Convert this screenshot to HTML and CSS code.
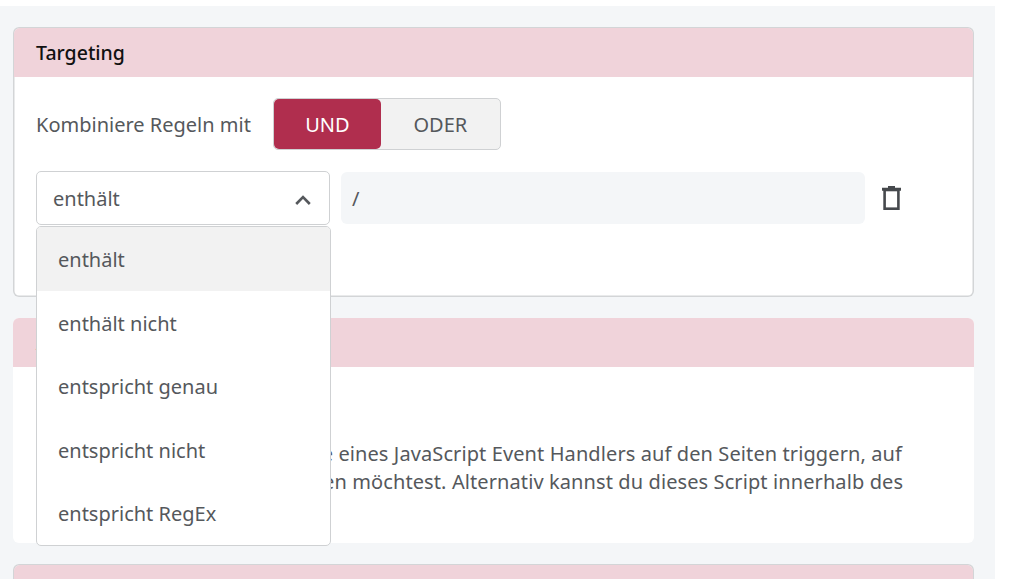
FILE: index.html
```html
<!DOCTYPE html>
<html lang="de">
<head>
<meta charset="utf-8">
<title>Targeting</title>
<link rel="stylesheet" href="styles.css">
</head>
<body>
<main class="page">
  <section class="card card-bordered">
    <h2 class="card-head">Targeting</h2>
    <div class="card-body targeting">
      <div class="combine">
        <span class="combine-label">Kombiniere Regeln mit</span>
        <div class="toggle">
          <button class="toggle-btn is-on">UND</button>
          <button class="toggle-btn">ODER</button>
        </div>
      </div>
      <div class="rule">
        <div class="select-wrap">
          <div class="select">
            <span>enthält</span>
            <svg class="chevron" viewBox="0 0 16 10" width="16" height="10"><path d="M1.2 9 8 2.2 14.8 9" fill="none" stroke="#55585c" stroke-width="2.6"/></svg>
          </div>
          <ul class="menu">
            <li class="menu-item is-active">enthält</li>
            <li class="menu-item">enthält nicht</li>
            <li class="menu-item">entspricht genau</li>
            <li class="menu-item">entspricht nicht</li>
            <li class="menu-item">entspricht RegEx</li>
          </ul>
        </div>
        <div class="value">/</div>
        <svg class="trash" viewBox="0 0 19 24" width="19" height="24"><path d="M0 1.8h19v3H0zM6 0h7v2H6z" fill="#46494d"/><rect x="2.6" y="4" width="13.8" height="18.7" fill="none" stroke="#46494d" stroke-width="2.6"/></svg>
      </div>
    </div>
  </section>
  <section class="card">
    <h2 class="card-head">Aktivierung</h2>
    <div class="card-body activation">
      <p class="text">Du kannst den Versuch mithilfe eines JavaScript Event Handlers auf den Seiten triggern, auf<br>denen du deinen Test ausspielen möchtest. Alternativ kannst du dieses Script innerhalb des</p>
    </div>
  </section>
  <section class="card card-bordered card-next">
    <div class="card-head"></div>
  </section>
</main>
</body>
</html>
```
FILE: styles.css
```css
* { box-sizing: border-box; }
html, body { margin: 0; height: 100%; overflow: hidden; background: #fff; }
body { padding-top: 6px; font-family: "Noto Sans", "Open Sans", sans-serif; color: #55585c; }
.page {
  width: 995px;
  height: 573px;
  overflow: hidden;
  background: #f4f6f8;
  padding: 21px 21px 0 13px;
  display: flex;
  flex-direction: column;
  gap: 21px;
}
.card { background: #fff; border-radius: 6px; flex: none; }
.card-bordered { box-shadow: inset 0 0 0 1.5px #d3d5d7; }
.card-head {
  margin: 0;
  height: 49px;
  display: flex;
  align-items: center;
  padding-left: 23px;
  background: #f0d3da;
  border-radius: 6px 6px 0 0;
  color: #111;
  font-size: 19.5px;
  font-weight: 500;
}
.card-bordered .card-head { margin: 1px 1px 0; padding-left: 22px; }
.targeting { height: 220px; padding: 21px 23px; }
.combine { display: flex; align-items: center; gap: 22px; }
.combine-label { font-size: 20px; }
.toggle {
  display: flex;
  width: 228px;
  height: 52px;
  border: 1px solid #cfd1d3;
  border-radius: 5px;
  background: #f2f2f2;
}
.toggle-btn {
  flex: 1 1 0;
  border: 0;
  background: transparent;
  border-radius: 5px;
  font: inherit;
  font-size: 20px;
  color: #55585c;
  padding: 0;
}
.toggle-btn.is-on { flex: none; width: 107px; background: #b02e4e; color: #fff; }
.rule { display: flex; align-items: center; margin-top: 21px; }
.select-wrap { position: relative; width: 294px; flex: none; }
.select {
  height: 54px;
  display: flex;
  align-items: center;
  justify-content: space-between;
  padding: 1px 18px 0 16px;
  border: 1px solid #cfd1d3;
  border-radius: 5px;
  background: #fff;
  font-size: 20px;
}
.chevron { margin-top: 2px; }
.menu {
  position: absolute;
  z-index: 5;
  left: 0;
  top: 55px;
  width: 295px;
  margin: 0;
  padding: 0;
  list-style: none;
  background: #fff;
  border: 1px solid #cfd1d3;
  border-radius: 5px;
  overflow: hidden;
}
.menu-item {
  height: 63.5px;
  display: flex;
  align-items: center;
  padding: 2px 0 0 21px;
  font-size: 20px;
}
.menu-item.is-active { background: #f2f2f2; }
.value {
  width: 524px;
  height: 52px;
  margin-left: 11px;
  display: flex;
  align-items: center;
  padding-left: 11px;
  background: #f4f6f8;
  border-radius: 6px;
  font-size: 20px;
}
.trash { margin-left: 17px; flex: none; }
.activation { height: 176px; padding: 73px 23px 0; }
.text { margin: 0; font-size: 20px; letter-spacing: 0.1px; line-height: 28px; white-space: nowrap; }
.card-next { height: 60px; }
```
